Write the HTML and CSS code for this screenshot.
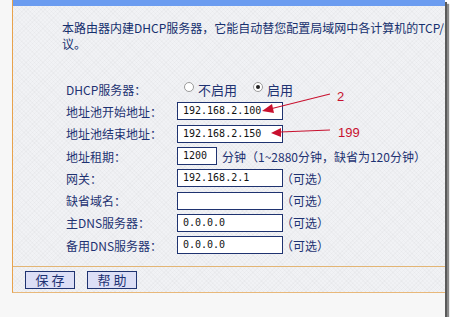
FILE: index.html
```html
<!DOCTYPE html>
<html>
<head>
  <meta charset="UTF-8">
  <title>DHCP服务</title>
  <link rel="stylesheet" href="styles.css">
</head>
<body>
  <div class="window">
    <div class="panel">
      <div class="panel-title">DHCP服务</div>

      <p class="intro">本路由器内建DHCP服务器，它能自动替您配置局域网中各计算机的TCP/IP协<br>议。</p>

      <div class="form">
        <div class="row radio-row">
          <span class="label">DHCP服务器：</span>
          <span class="field">
            <span class="radio"></span><span class="radio-text">不启用</span>
            <span class="radio checked"></span><span class="radio-text">启用</span>
          </span>
        </div>
        <div class="row">
          <span class="label">地址池开始地址：</span>
          <span class="field"><span class="box">192.168.2.100</span></span>
        </div>
        <div class="row">
          <span class="label">地址池结束地址：</span>
          <span class="field"><span class="box">192.168.2.150</span></span>
        </div>
        <div class="row">
          <span class="label">地址租期：</span>
          <span class="field"><span class="box short">1200</span><span class="unit">分钟（1~2880分钟，缺省为120分钟）</span></span>
        </div>
        <div class="row">
          <span class="label">网关：</span>
          <span class="field"><span class="box">192.168.2.1</span><span class="hint">（可选）</span></span>
        </div>
        <div class="row">
          <span class="label">缺省域名：</span>
          <span class="field"><span class="box"></span><span class="hint">（可选）</span></span>
        </div>
        <div class="row">
          <span class="label">主DNS服务器：</span>
          <span class="field"><span class="box">0.0.0.0</span><span class="hint">（可选）</span></span>
        </div>
        <div class="row">
          <span class="label">备用DNS服务器：</span>
          <span class="field"><span class="box">0.0.0.0</span><span class="hint">（可选）</span></span>
        </div>
      </div>

      <div class="actions">
        <button class="btn">保 存</button>
        <button class="btn">帮 助</button>
      </div>
    </div>

    <!-- red notes drawn over the screenshot -->
    <svg class="notes" width="445" height="317" viewBox="0 0 445 317">
      <g stroke="#c8102e" stroke-width="1.2" fill="none">
        <polyline points="330,94 310,99 290,104 270,109"/>
        <polyline points="330,130 305,131 280,132"/>
      </g>
      <g fill="#c8102e">
        <polygon points="262,111 272,104 274,113"/>
        <polygon points="271,133 281,128 281,137"/>
        <text x="337" y="101">2</text>
        <text x="338" y="137">199</text>
      </g>
    </svg>
  </div>
</body>
</html>
```

FILE: styles.css
```css
body { margin: 0; background: #ffffff; font-family: "Noto Sans CJK SC", "Liberation Sans", sans-serif; }

/* --- window with the dark drop shadow --- */
.window {
  position: relative;
  width: 445px;
  height: 317px;
  overflow: hidden;
  background: #f7f7f7;
  box-shadow: 2px 2px 0 #5a5a5a, 4px 4px 1px #8a8a8a;
}

.panel {
  margin-left: 12px;
  width: 480px;
  height: 292px;
  border-left: 1px solid #e8a24c;
  border-bottom: 1px solid #e8b87a;
  background-color: #f1f2f5;
  background-image:
    repeating-linear-gradient(45deg, rgba(0,0,0,0.018) 0 1px, transparent 1px 3px),
    repeating-linear-gradient(-45deg, rgba(0,0,0,0.018) 0 1px, transparent 1px 3px);
  display: flex;
  flex-direction: column;
}

.panel-title {
  height: 20px;
  margin-top: -14px;
  padding-left: 30px;
  background: #6b9cf0;
  color: #eef3ff;
  font-size: 12px;
  font-weight: bold;
  line-height: 13px;
}

.intro {
  margin: 14px 0 0 49px;
  font-size: 12px;
  line-height: 16px;
  color: #16306e;
  white-space: nowrap;
}

/* --- form rows --- */
.form {
  margin-top: 26px;
  padding-left: 53px;
}
.row {
  display: flex;
  align-items: center;
  height: 22.3px;
  font-size: 12px;
  color: #1e3272;
}
.label { width: 111px; flex: none; }
.field { display: flex; align-items: center; }

.box {
  box-sizing: border-box;
  width: 106px;
  height: 18px;
  padding-left: 5px;
  border: 1px solid #1f3370;
  background: #fff;
  color: #111;
  font-family: "DejaVu Sans Mono", monospace;
  font-size: 10px;
  line-height: 16px;
}
.box.short { width: 40px; }
.unit { margin-left: 5px; }
.hint { margin-left: -2px; }

.radio {
  box-sizing: border-box;
  width: 10px;
  height: 10px;
  margin: -4px 4px 0 7px;
  border: 1px solid #9a9a9a;
  border-radius: 50%;
  background: #fff;
  position: relative;
}
.radio.checked::after {
  content: "";
  position: absolute;
  left: 2px; top: 2px;
  width: 4px; height: 4px;
  border-radius: 50%;
  background: #222;
}
.radio-text { margin-right: 9px; font-size: 13px; }

/* --- button bar --- */
.actions {
  margin-top: 10px;
  border-top: 1px solid #e3b574;
  padding: 4px 0 0 12px;
  display: flex;
  gap: 12px;
}
.btn {
  width: 50px;
  height: 18px;
  padding: 0;
  border: 1px solid #1f3370;
  background: #dcdff6;
  color: #1e3272;
  font-family: inherit;
  font-size: 13px;
  line-height: 16px;
}

.notes {
  position: absolute;
  left: 0;
  top: 0;
  font-family: "Liberation Sans", sans-serif;
  font-size: 13px;
}
```
